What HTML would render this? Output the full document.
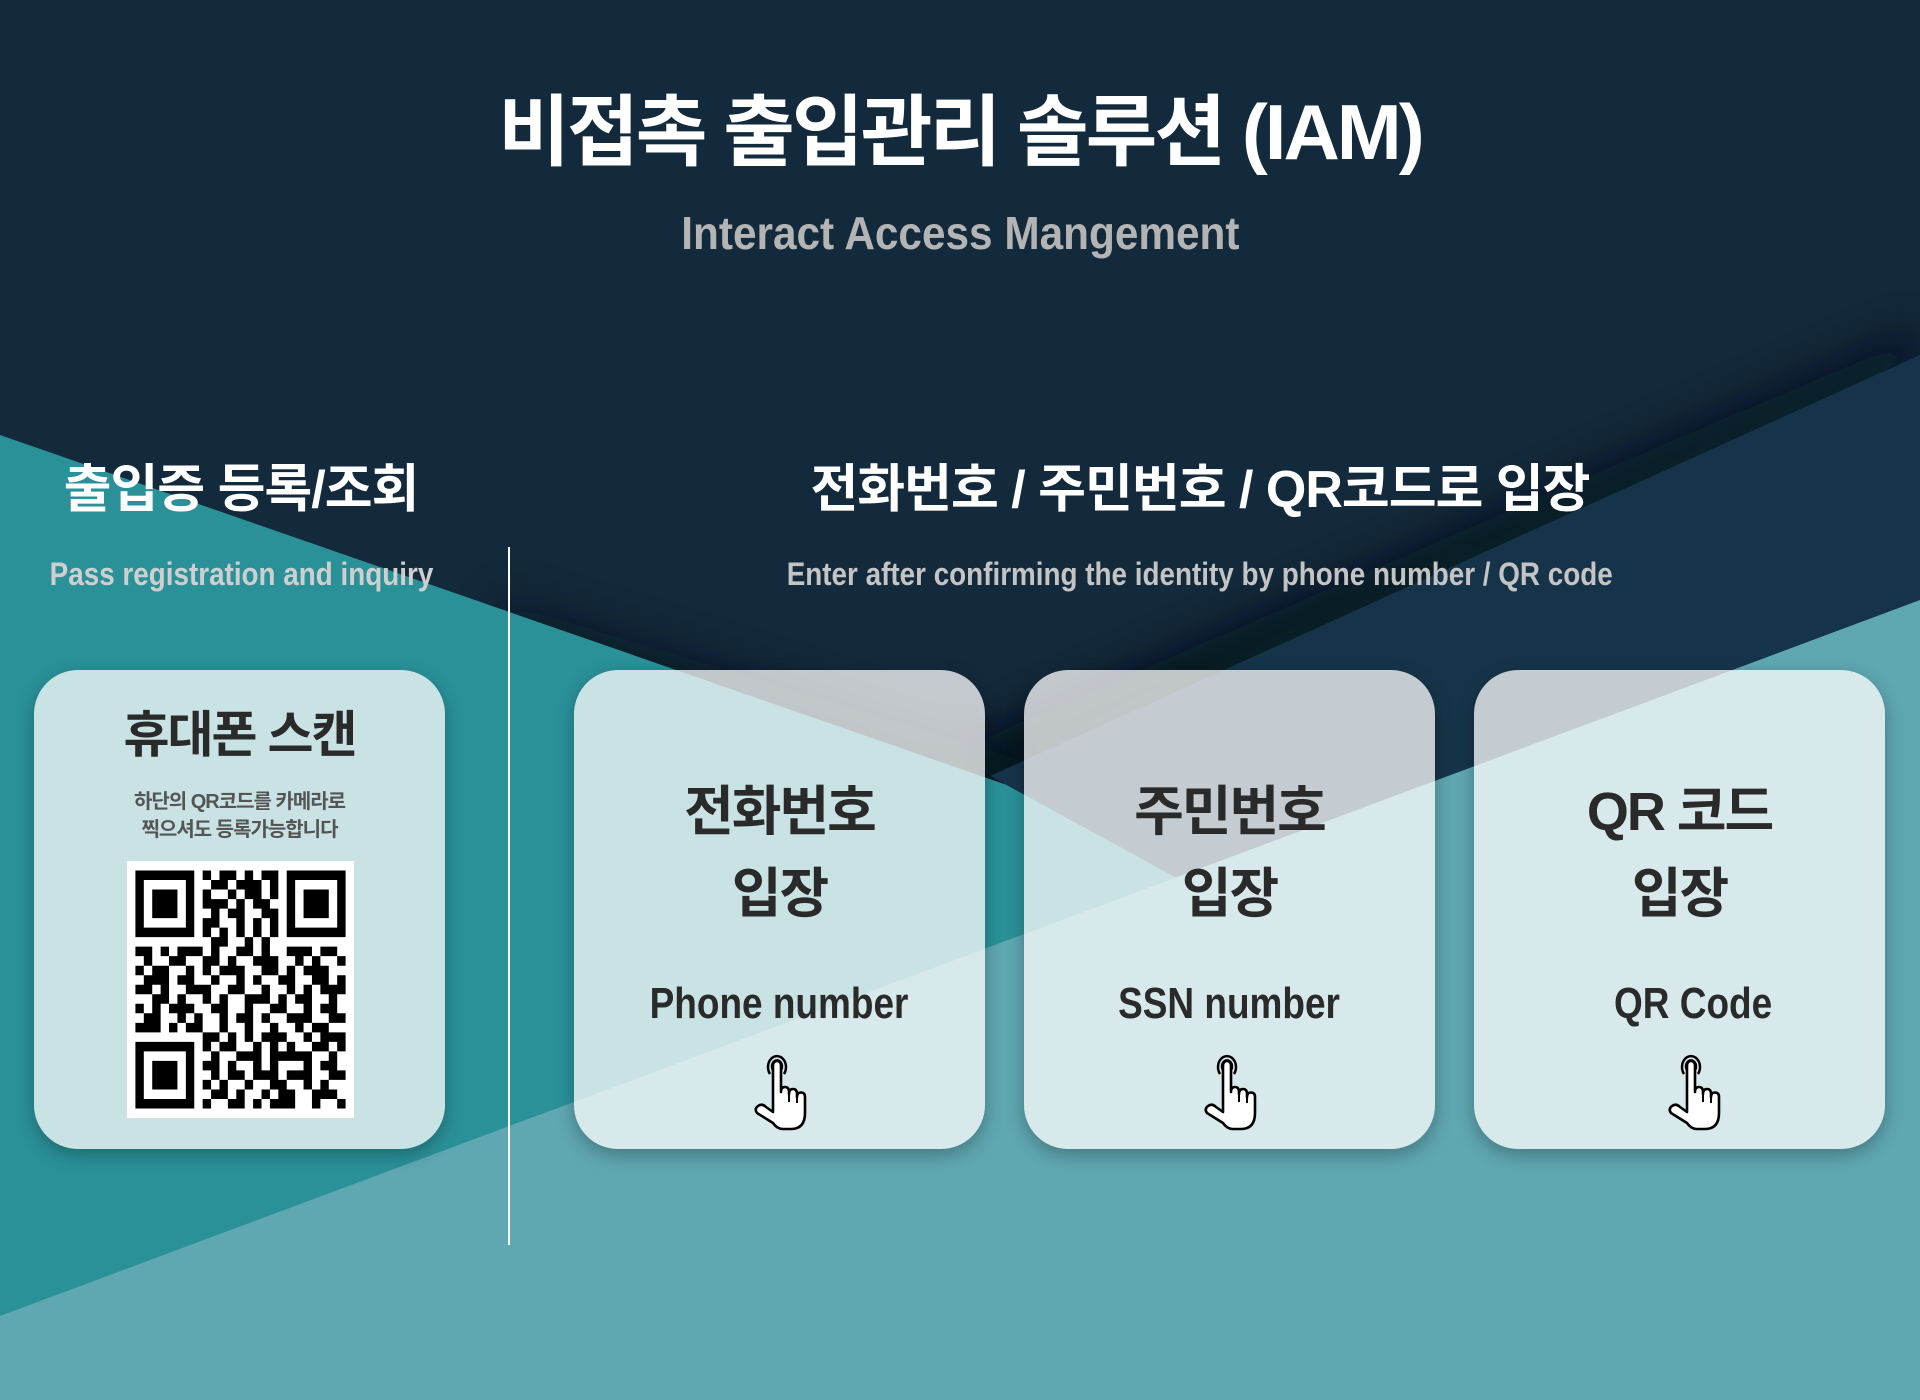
<!DOCTYPE html>
<html><head><meta charset="utf-8"><style>
*{margin:0;padding:0;box-sizing:border-box}
body{width:1920px;height:1400px;overflow:hidden;position:relative;background:#132a3c;font-family:"Liberation Sans","Noto Sans CJK KR",sans-serif}
.bg{position:absolute;left:0;top:0}
.t{position:absolute;text-align:center;white-space:nowrap;font-weight:bold}
.sx{display:inline-block}
.card{position:absolute;top:670px;width:411px;height:479px;border-radius:44px;background:rgba(255,255,255,0.75);box-shadow:0 6px 18px rgba(0,0,0,0.28)}
.k{position:absolute;left:0;width:100%;text-align:center;font-weight:bold;color:#2a2a2a;white-space:nowrap}
.hand{position:absolute;left:50%;margin-left:-32px;top:380px}
</style></head><body>
<svg class="bg" width="1920" height="1400" viewBox="0 0 1920 1400">
<defs><filter id="b" x="-20%" y="-50%" width="140%" height="200%"><feGaussianBlur stdDeviation="22"/></filter></defs>
<rect width="1920" height="1400" fill="#132a3c"/>
<polygon points="980,790 1920,362 1920,330 980,740" fill="#050d14" filter="url(#b)" opacity="0.85"/>
<polygon points="500,640 1217,870 1217,820 500,600" fill="#050d14" filter="url(#b)" opacity="0.6"/>
<polygon points="0,435 1217,858 1217,1000 0,1400" fill="#2a9199"/>
<polygon points="990,776 1920,355 1920,700 1217,900" fill="#163449"/>
<polygon points="0,1316 1920,600 1920,1400 0,1400" fill="#5fa7b1"/>
</svg>

<div class="t" style="left:0;width:1920px;top:84px;font-size:78px;line-height:96px;color:#fff;letter-spacing:-3px">비접촉 출입관리 솔루션 (IAM)</div>
<div class="t" style="left:0;width:1920px;top:205px;font-size:46px;line-height:56px;color:#b4b4b4"><span class="sx" style="transform:scaleX(0.92)">Interact Access Mangement</span></div>

<div class="t" style="left:0;width:482px;top:458px;font-size:52px;line-height:64px;color:#fff;letter-spacing:-1px">출입증 등록/조회</div>
<div class="t" style="left:0;width:482px;top:554px;font-size:32px;line-height:40px;color:#cfcfcf"><span class="sx" style="transform:scaleX(0.87)">Pass registration and inquiry</span></div>

<div style="position:absolute;left:508px;top:547px;width:2px;height:698px;background:#fff"></div>

<div class="t" style="left:600px;width:1200px;top:458px;font-size:52px;line-height:64px;color:#fff;letter-spacing:-1px">전화번호 / 주민번호 / QR코드로 입장</div>
<div class="t" style="left:600px;width:1200px;top:554px;font-size:32px;line-height:40px;color:#c4c4c4"><span class="sx" style="transform:scaleX(0.87)">Enter after confirming the identity by phone number / QR code</span></div>

<div class="card" style="left:34px">
 <div class="k" style="top:34px;font-size:50px;line-height:62px;letter-spacing:-2px">휴대폰 스캔</div>
 <div class="k" style="top:118px;font-size:20px;line-height:28px;color:#555;font-weight:bold;letter-spacing:-1px">하단의 QR코드를 카메라로<br>찍으셔도 등록가능합니다</div>
 <svg style="position:absolute;left:93px;top:191px" width="227" height="257" viewBox="-1 -1 27 27" preserveAspectRatio="none">
  <rect x="-1" y="-1" width="27" height="27" fill="#fff"/>
  <g fill="#000">
   <path d="M0 0h7v7h-7zM18 0h7v7h-7zM0 18h7v7h-7z"/>
  </g>
  <g fill="#fff"><path d="M1 1h5v5h-5zM19 1h5v5h-5zM1 19h5v5h-5z"/></g>
  <g fill="#000"><path d="M2 2h3v3h-3zM20 2h3v3h-3zM2 20h3v3h-3z"/>
  <path d="M8 0h1v1h-1zM10 0h2v1h-2zM13 0h1v1h-1zM15 0h2v1h-2zM9 1h2v1h-2zM12 1h3v1h-3zM16 1h1v1h-1zM8 2h1v1h-1zM11 2h1v1h-1zM13 2h2v1h-2zM16 2h1v1h-1zM8 3h3v1h-3zM12 3h1v1h-1zM14 3h2v1h-2zM9 4h1v1h-1zM11 4h2v1h-2zM15 4h2v1h-2zM8 5h2v1h-2zM12 5h1v1h-1zM14 5h1v1h-1zM16 5h1v1h-1zM8 6h1v1h-1zM10 6h1v1h-1zM12 6h1v1h-1zM14 6h1v1h-1zM16 6h1v1h-1zM9 7h2v1h-2zM13 7h1v1h-1zM15 7h1v1h-1z
  M0 8h2v1h-2zM3 8h1v1h-1zM5 8h3v1h-3zM9 8h1v1h-1zM12 8h2v1h-2zM15 8h1v1h-1zM18 8h3v1h-3zM22 8h2v1h-2z
  M1 9h1v1h-1zM4 9h2v1h-2zM8 9h2v1h-2zM11 9h1v1h-1zM14 9h3v1h-3zM19 9h1v1h-1zM21 9h1v1h-1zM24 9h1v1h-1z
  M0 10h1v1h-1zM2 10h2v1h-2zM6 10h1v1h-1zM8 10h1v1h-1zM10 10h3v1h-3zM15 10h2v1h-2zM18 10h1v1h-1zM20 10h3v1h-3z
  M1 11h3v1h-3zM5 11h2v1h-2zM9 11h1v1h-1zM12 11h1v1h-1zM14 11h1v1h-1zM17 11h2v1h-2zM21 11h2v1h-2zM24 11h1v1h-1z
  M0 12h2v1h-2zM3 12h1v1h-1zM6 12h3v1h-3zM11 12h2v1h-2zM15 12h1v1h-1zM18 12h1v1h-1zM20 12h1v1h-1zM22 12h3v1h-3z
  M2 13h2v1h-2zM5 13h1v1h-1zM8 13h1v1h-1zM10 13h1v1h-1zM13 13h3v1h-3zM17 13h1v1h-1zM19 13h2v1h-2zM23 13h1v1h-1z
  M0 14h1v1h-1zM2 14h1v1h-1zM4 14h3v1h-3zM9 14h2v1h-2zM13 14h1v1h-1zM16 14h2v1h-2zM20 14h1v1h-1zM22 14h2v1h-2z
  M1 15h2v1h-2zM5 15h1v1h-1zM7 15h1v1h-1zM10 15h1v1h-1zM12 15h2v1h-2zM15 15h1v1h-1zM18 15h3v1h-3zM23 15h2v1h-2z
  M0 16h3v1h-3zM4 16h1v1h-1zM6 16h2v1h-2zM10 16h1v1h-1zM13 16h1v1h-1zM16 16h1v1h-1zM19 16h1v1h-1zM21 16h2v1h-2z
  M8 17h2v1h-2zM11 17h1v1h-1zM13 17h1v1h-1zM15 17h3v1h-3zM20 17h1v1h-1zM22 17h3v1h-3z
  M8 18h1v1h-1zM10 18h2v1h-2zM14 18h1v1h-1zM16 18h1v1h-1zM18 18h1v1h-1zM21 18h2v1h-2zM24 18h1v1h-1z
  M9 19h1v1h-1zM12 19h3v1h-3zM16 19h5v1h-5zM23 19h1v1h-1z
  M8 20h2v1h-2zM11 20h1v1h-1zM14 20h1v1h-1zM16 20h1v1h-1zM20 20h1v1h-1zM22 20h2v1h-2z
  M9 21h1v1h-1zM11 21h2v1h-2zM14 21h2v1h-2zM16 21h1v1h-1zM18 21h3v1h-3zM23 21h2v1h-2z
  M8 22h1v1h-1zM10 22h1v1h-1zM13 22h1v1h-1zM16 22h2v1h-2zM20 22h1v1h-1zM22 22h1v1h-1z
  M9 23h2v1h-2zM12 23h1v1h-1zM15 23h1v1h-1zM17 23h2v1h-2zM21 23h3v1h-3z
  M8 24h1v1h-1zM11 24h2v1h-2zM14 24h1v1h-1zM16 24h3v1h-3zM21 24h1v1h-1zM24 24h1v1h-1z"/></g>
 </svg>
</div>

<svg width="0" height="0" style="position:absolute">
 <defs>
  <g id="hand">
   <path d="M22 24 a9 11 0 1 1 14 0" fill="none" stroke="#000" stroke-width="2.5"/>
   <path d="M25 20 a5 6 0 1 1 8 0" fill="none" stroke="#000" stroke-width="2.5"/>
   <path d="M25 62 L25 16 q0-5 4-5 q4 0 4 5 L33 42 q0-5 4-5 q4 0 4 5 v2 q0-5 4-5 q4 0 4 5 v3 q0-4.5 4-4.5 q4 0 4 4.5 v16 q0 16 -14 16 h-8 q-6 0 -10-6 L9 63 q-3-4 1-7 q4-3 8 1 z" fill="#fff" stroke="#000" stroke-width="2.6" stroke-linejoin="round"/>
   <path d="M41 44 v8 M49 47 v6" stroke="#000" stroke-width="2" fill="none"/>
  </g>
 </defs>
</svg>

<div class="card" style="left:574px">
 <div class="k" style="top:110px;font-size:54px;line-height:64px;letter-spacing:-2px">전화번호</div>
 <div class="k" style="top:192px;font-size:54px;line-height:64px;letter-spacing:-2px">입장</div>
 <div class="k" style="top:308px;font-size:44px;line-height:52px"><span class="sx" style="transform:scaleX(0.84)">Phone number</span></div>
 <svg class="hand" width="66" height="84" viewBox="0 0 66 84"><use href="#hand"/></svg>
</div>
<div class="card" style="left:1024px">
 <div class="k" style="top:110px;font-size:54px;line-height:64px;letter-spacing:-2px">주민번호</div>
 <div class="k" style="top:192px;font-size:54px;line-height:64px;letter-spacing:-2px">입장</div>
 <div class="k" style="top:308px;font-size:44px;line-height:52px"><span class="sx" style="transform:scaleX(0.84)">SSN number</span></div>
 <svg class="hand" width="66" height="84" viewBox="0 0 66 84"><use href="#hand"/></svg>
</div>
<div class="card" style="left:1474px">
 <div class="k" style="top:110px;font-size:54px;line-height:64px;letter-spacing:-2px">QR 코드</div>
 <div class="k" style="top:192px;font-size:54px;line-height:64px;letter-spacing:-2px">입장</div>
 <div class="k" style="top:308px;font-size:44px;line-height:52px;padding-left:28px"><span class="sx" style="transform:scaleX(0.84)">QR Code</span></div>
 <svg class="hand" width="66" height="84" viewBox="0 0 66 84" style="margin-left:-18px"><use href="#hand"/></svg>
</div>
</body></html>
